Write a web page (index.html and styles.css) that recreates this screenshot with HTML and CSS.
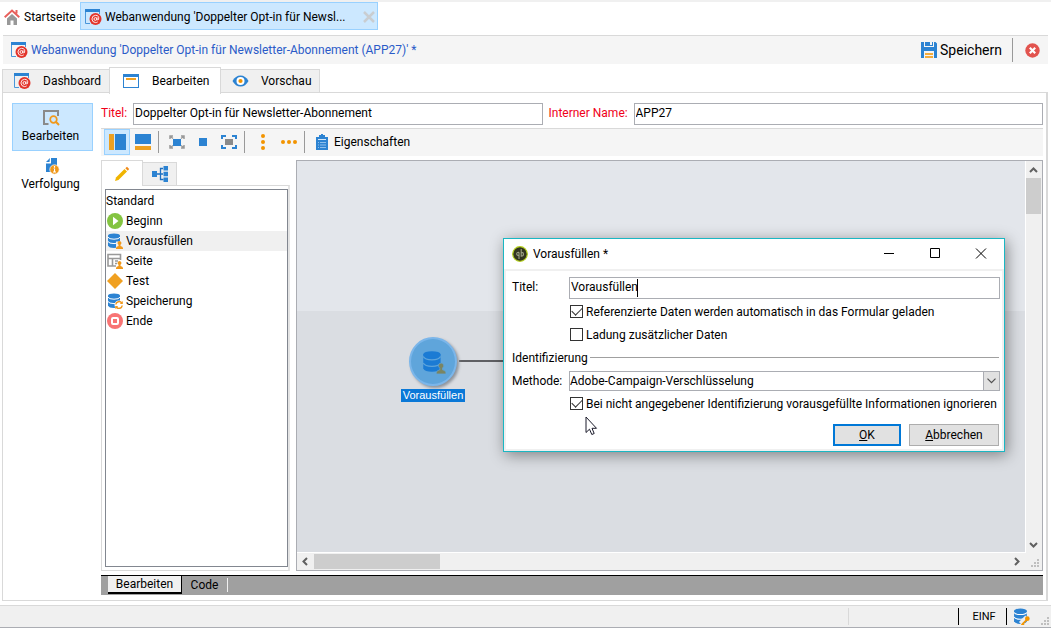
FILE: index.html
```
<!DOCTYPE html>
<html lang="de">
<head>
<meta charset="utf-8">
<title>Webanwendung</title>
<link rel="stylesheet" href="styles.css">
</head>
<body>
<svg class="defs" aria-hidden="true">
  <symbol id="webapp" viewBox="0 0 17 16">
    <path d="M.5 3V14.500H5M14.500 3v2" fill="none" stroke="#4a96da" stroke-width="1"/>
    <rect x="0" y="0" width="15" height="3" fill="#2c83d2"/>
    <circle cx="10.500" cy="10" r="6" fill="#e3342b"/>
    <circle cx="10.400" cy="10" r="1.400" fill="none" stroke="#fff" stroke-width=".9"/>
    <path d="M12 8.300v2q.3 1.200 1.500.3Q14.600 6.400 10.500 6.300Q7 6.600 6.900 10Q7.200 13.400 10.500 13.600q1.200 0 2.200-.7" fill="none" stroke="#fff" stroke-width=".9"/>
  </symbol>
  <symbol id="db" viewBox="0 0 16 16">
    <path d="M1 2.500V12.500Q2 15 7 15Q12 15 13 12.500V2.500Z" fill="#2c83d2"/>
    <ellipse cx="7" cy="2.800" rx="6" ry="2.400" fill="#2c83d2"/>
    <path d="M1 4.200Q2 6.200 7 6.200T13 4.200M1 8.500Q2 10.600 7 10.600T13 8.500" fill="none" stroke="#fff" stroke-width="1"/>
  </symbol>
  <symbol id="person" viewBox="0 0 7 8">
    <path d="M3.500 0a2 2 0 0 1 1 3.700L4.500 5Q6.800 5.300 7 7V8H0V7Q.2 5.300 2.500 5V3.700A2 2 0 0 1 3.500 0Z"/>
  </symbol>
</svg>

<nav class="window-tabs">
  <a class="window-tab" href="#">
    <svg width="16" height="16" viewBox="0 0 16 16"><path d="M3 9.500L8 5l5 4.500V16h-3.500v-4.500h-3V16H3Z" fill="#999"/><path d="M.7 8.200L8 1.600l7.300 6.600M12.500 1v3.500" fill="none" stroke="#e8605c" stroke-width="2"/></svg>
    Startseite
  </a>
  <div class="window-tab current">
    <svg width="17" height="16"><use href="#webapp"/></svg>
    <span>Webanwendung 'Doppelter Opt-in für Newsl...</span>
    <button class="tab-close" aria-label="Tab schließen"><svg width="12" height="12" viewBox="0 0 12 12"><path d="M1 1l10 10M11 1L1 11" stroke="#c9cdd1" stroke-width="2.500"/></svg></button>
  </div>
</nav>

<header class="title-bar">
  <svg width="17" height="16"><use href="#webapp"/></svg>
  <h1>Webanwendung 'Doppelter Opt-in für Newsletter-Abonnement (APP27)' *</h1>
  <button class="save">
    <svg width="16" height="16" viewBox="0 0 16 16"><path d="M0 0H3V5H13V0H14.500L16 1.500V16H13V9H3V16H0Z" fill="#2c83d2"/><path d="M4 0h5v3h2V0h1v4H4Z" fill="#2c83d2"/><path d="M3 5h10v4H3z" fill="#2c83d2"/><path d="M4 12h8M4 15h8" stroke="#f29400" stroke-width="1.400"/></svg>
    Speichern
  </button>
  <button class="discard" aria-label="Abbrechen"><svg width="15" height="15" viewBox="0 0 15 15"><circle cx="7.500" cy="7.500" r="7.200" fill="#e2544f"/><path d="M4.800 4.800l5.400 5.400M10.200 4.800l-5.400 5.400" stroke="#fff" stroke-width="2.200"/></svg></button>
</header>

<nav class="page-tabs">
  <button class="page-tab tab-dash"><svg width="17" height="16"><use href="#webapp"/></svg>Dashboard</button>
  <button class="page-tab selected"><svg width="17" height="16" viewBox="0 0 17 16"><rect x="1.500" y="1.500" width="15" height="13" fill="#fff" stroke="#2c83d2"/><path d="M1 2.500h16" stroke="#2c83d2" stroke-width="3"/><path d="M4 6h10" stroke="#f0a020" stroke-width="2"/></svg>Bearbeiten</button>
  <button class="page-tab tab-view"><svg width="17" height="16" viewBox="0 0 17 16"><path d="M.5 8Q3.500 2.500 8.500 2.500T16.500 8Q13.500 13.500 8.500 13.500T.5 8Z" fill="#2c83d2"/><circle cx="8.500" cy="8" r="4" fill="#fff"/><circle cx="8.500" cy="8" r="2.100" fill="#f29400"/></svg>Vorschau</button>
</nav>

<main class="page">
  <nav class="side">
    <button class="side-item on"><svg width="18" height="18" viewBox="0 0 18 18"><path d="M6.500 15H2V2H16V7" fill="none" stroke="#8a8a8a" stroke-width="2"/><circle cx="11.500" cy="10.500" r="3.300" fill="none" stroke="#f0981a" stroke-width="1.700"/><path d="M13.800 12.800l3.200 3.200" stroke="#f0981a" stroke-width="2"/></svg>Bearbeiten</button>
    <button class="side-item"><svg width="18" height="18" viewBox="0 0 18 18"><path d="M4 6.500H9V1H15V15H4Z" fill="#2c83d2"/><path d="M8 1L4 5H7.500Z" fill="#2c83d2"/><circle cx="12.500" cy="12.500" r="4.700" fill="#f0981a" stroke="#fff" stroke-width=".7"/><path d="M12.500 9v1.700M11.500 12h1v3M11 15h3" stroke="#fff" stroke-width="1.200"/></svg>Verfolgung</button>
  </nav>

  <section class="editor">
    <div class="fields">
      <label for="title">Titel:</label>
      <input id="title" type="text" value="Doppelter Opt-in für Newsletter-Abonnement">
      <label for="iname" class="second">Interner Name:</label>
      <input id="iname" class="wide" type="text" value="APP27">
    </div>

    <div class="toolbar">
      <button class="tool pressed" aria-label="Vertikal"><svg width="18" height="16" viewBox="0 0 18 16"><path d="M1 0h5v16H1z" fill="#eda020"/><path d="M7 0h11v16H7z" fill="#2c83d2"/></svg></button>
      <button class="tool" aria-label="Horizontal"><svg width="16" height="16" viewBox="0 0 16 16"><path d="M0 0h16v10H0z" fill="#2c83d2"/><path d="M0 12h16v4H0z" fill="#eda020"/></svg></button>
      <span class="sep"></span>
      <button class="tool" aria-label="Einpassen"><svg width="16" height="16" viewBox="0 0 16 16"><path d="M1 5V2h3M12 2h3v3M15 11v3h-3M4 14H1v-3M1.500 2.500l2.500 2M14.500 2.500L12 4.500M1.500 13.500L4 11.500M14.500 13.500L12 11.500" fill="none" stroke="#999" stroke-width="1.500"/><path d="M4 5h8v7H4z" fill="#2c83d2"/></svg></button>
      <button class="tool" aria-label="Originalgröße"><svg width="16" height="16" viewBox="0 0 16 16"><path d="M4 4h8v8H4z" fill="#2c83d2"/></svg></button>
      <button class="tool" aria-label="Vollbild"><svg width="16" height="16" viewBox="0 0 16 16"><path d="M4 5h8v6H4z" fill="#8a8a8a"/><path d="M1 5V2h4M11 2h4v3M15 11v3h-4M5 14H1v-3" fill="none" stroke="#2c83d2" stroke-width="2"/></svg></button>
      <span class="sep"></span>
      <button class="tool" aria-label="Vertikal ausrichten"><svg width="16" height="16" viewBox="0 0 16 16" fill="#f29400"><circle cx="8" cy="2" r="2"/><circle cx="8" cy="8" r="2"/><circle cx="8" cy="14" r="2"/></svg></button>
      <button class="tool" aria-label="Horizontal ausrichten"><svg width="16" height="16" viewBox="0 0 16 16" fill="#f29400"><circle cx="2" cy="8" r="2"/><circle cx="8" cy="8" r="2"/><circle cx="14" cy="8" r="2"/></svg></button>
      <span class="sep"></span>
      <button class="tool text"><svg width="16" height="16" viewBox="0 0 16 16"><path d="M2 3h3V1h2V0h2v1h2v2h3v13H2z" fill="#2c83d2"/><path d="M4 5.500h8" stroke="#d5e8f9"/><path d="M4 8.500h1M6 8.500h6M4 11h1M6 11h6M4 13.500h1M6 13.500h6" stroke="#8fc0ec"/></svg>Eigenschaften</button>
    </div>

    <div class="work">
      <aside class="palette">
        <div class="palette-tabs">
          <button class="ptab active" aria-label="Aktivitäten"><svg width="16" height="16" viewBox="0 0 16 16"><path d="M1 15l1-3.500L10.500 3l2.500 2.500L4.500 14Z" fill="#f0b400"/><path d="M11.300 2.200L13 .8 15.200 3l-1.400 1.700Z" fill="#f08a1a"/></svg></button>
          <button class="ptab" aria-label="Struktur"><svg width="16" height="16" viewBox="0 0 16 16"><path d="M5 8h3M11 2.500H8.500v11h3M8 8h3" fill="none" stroke="#1d6fc0" stroke-width="1.300"/><path d="M0 5h5v6H0zM11.500 0H16v4.500h-4.500zM11.500 5.800H16v4.500h-4.500zM11.500 11.500H16V16h-4.500z" fill="#2c83d2"/></svg></button>
        </div>
        <div class="palette-body">
          <ul class="list">
            <li class="group">Standard</li>
            <li><svg width="16" height="16" viewBox="0 0 16 16"><circle cx="8" cy="8" r="8" fill="#84c441"/><path d="M6 3.800L11.500 8 6 12.200z" fill="#fff"/></svg>Beginn</li>
            <li class="hover"><svg width="16" height="16" viewBox="0 0 16 16"><use href="#db"/><path d="M9 8.500h7V16H9z" fill="#f0f0f0"/><use href="#person" x="9" y="8" width="7" height="8" fill="#f0981a"/></svg>Vorausfüllen</li>
            <li><svg width="16" height="16" viewBox="0 0 16 16"><path d="M9 13H1V1.500H13.500V7M1 5.500H13.500M5.500 6V13M8 8h3M8 10.500h2" fill="none" stroke="#999" stroke-width="1.600"/><use href="#person" x="9" y="8" width="7" height="8" fill="#f0981a"/></svg>Seite</li>
            <li><svg width="16" height="16" viewBox="0 0 16 16"><path d="M8 0l8 8-8 8-8-8z" fill="#f0a020"/></svg>Test</li>
            <li><svg width="16" height="16" viewBox="0 0 16 16"><use href="#db"/><circle cx="12" cy="12" r="4.500" fill="#fff"/><path d="M8.800 11.500a3.300 3.300 0 0 1 6-1.500M15.200 12.500a3.300 3.300 0 0 1-6 1.500" fill="none" stroke="#f0981a" stroke-width="1.500"/><path d="M15.800 8v3h-3zM8.200 16v-3h3z" fill="#f0981a"/></svg>Speicherung</li>
            <li><svg width="16" height="16" viewBox="0 0 16 16"><circle cx="8" cy="8" r="8" fill="#f87474"/><rect x="5" y="5" width="6" height="6" rx="1" fill="#f87474" stroke="#fff" stroke-width="2"/></svg>Ende</li>
          </ul>
        </div>
      </aside>

      <div class="canvas">
        <div class="stage">
          <div class="link"></div>
          <div class="node">
            <div class="disc"><svg width="26" height="26" viewBox="0 0 24 24"><path d="M3 5v13q1.500 3 8 3t8-3V5z" fill="#1b7bd4"/><ellipse cx="11" cy="5" rx="8" ry="3" fill="#1b7bd4"/><path d="M3 7q1.500 3 8 3t8-3M3 13q1.500 3 8 3t8-3" fill="none" stroke="#5fa5db" stroke-width="1.200"/><use href="#person" x="15" y="13" width="9" height="10" fill="#7a8562" stroke="#5fa5db" stroke-width=".5"/></svg></div>
            <span class="node-name">Vorausfüllen</span>
          </div>
        </div>
        <div class="vbar">
          <svg width="9" height="6" viewBox="0 0 9 6"><path d="M1 5l3.500-3.500L8 5" fill="none" stroke="#606060" stroke-width="2"/></svg>
          <span class="vthumb"></span>
          <svg class="end" width="9" height="6" viewBox="0 0 9 6"><path d="M1 1l3.500 3.500L8 1" fill="none" stroke="#606060" stroke-width="2"/></svg>
        </div>
        <div class="hbar">
          <svg width="6" height="9" viewBox="0 0 6 9"><path d="M5 1L1.500 4.500 5 8" fill="none" stroke="#606060" stroke-width="2"/></svg>
          <span class="hthumb"></span>
          <svg class="end" width="6" height="9" viewBox="0 0 6 9"><path d="M1 1l3.500 3.500L1 8" fill="none" stroke="#606060" stroke-width="2"/></svg>
        </div>
        <div class="corner"><svg width="8" height="8" viewBox="0 0 8 8"><path d="M6 0h2v2H6zM3 3h2v2H3zM6 3h2v2H6zM0 6h2v2H0zM3 6h2v2H3zM6 6h2v2H6z" fill="#bfbfbf"/></svg></div>
      </div>
    </div>

    <div class="sheet-tabs">
      <button class="sheet active">Bearbeiten</button>
      <button class="sheet">Code</button>
    </div>
  </section>
</main>

<footer class="status">
  <span class="cell grow"></span>
  <span class="cell blank"></span>
  <span class="cell caps">EINF</span>
  <span class="cell conn"><svg width="17" height="17" viewBox="0 0 16 16"><use href="#db"/><path d="M7 14.500L13 8.500" stroke="#efefef" stroke-width="4"/><path d="M8 16l5.500-5.500M8.500 14.500l1.800 1.500" fill="none" stroke="#f29400" stroke-width="1.600"/><circle cx="13.500" cy="10" r="2.200" fill="#f29400"/></svg></span>
  <svg class="grip" width="8" height="8" viewBox="0 0 8 8"><path d="M6 0h2v2H6zM3 3h2v2H3zM6 3h2v2H6zM0 6h2v2H0zM3 6h2v2H3zM6 6h2v2H6z" fill="#bfbfbf"/></svg>
</footer>

<section class="dialog" role="dialog" aria-labelledby="dlg-title">
  <header class="dialog-head">
    <svg width="16" height="16" viewBox="0 0 16 16"><circle cx="8" cy="8" r="7.300" fill="#32351f" stroke="#b4cf1d" stroke-width="1.200"/><path d="M7 13V6.300M7 6.300q-2.300-.2-2.300 1.600 0 1.700 2 1.700M9.200 3v7.200q2.300 0 2.300-2.100 0-1.700-2-1.700" fill="none" stroke="#9da284" stroke-width="1.100"/></svg>
    <h2 id="dlg-title">Vorausfüllen *</h2>
    <button class="wbtn" aria-label="Minimieren"><svg width="12" height="12" viewBox="0 0 12 12"><path d="M1 5.500h10" stroke="#000"/></svg></button>
    <button class="wbtn" aria-label="Maximieren"><svg width="12" height="12" viewBox="0 0 12 12"><path d="M1.500 .5h9v9h-9z" fill="none" stroke="#000"/></svg></button>
    <button class="wbtn" aria-label="Schließen"><svg width="12" height="12" viewBox="0 0 12 12"><path d="M1 .5l10 10M11 .5l-10 10" stroke="#000"/></svg></button>
  </header>
  <form class="dialog-body">
    <div class="row">
      <label for="dtitle">Titel:</label>
      <div class="caret-box"><input id="dtitle" type="text" value="Vorausfüllen"><span class="caret"></span></div>
    </div>
    <label class="check"><input type="checkbox" checked>Referenzierte Daten werden automatisch in das Formular geladen</label>
    <label class="check"><input type="checkbox">Ladung zusätzlicher Daten</label>
    <div class="section">Identifizierung</div>
    <div class="row method">
      <label for="method">Methode:</label>
      <div class="select-box">
        <select id="method"><option>Adobe-Campaign-Verschlüsselung</option></select>
        <span class="arrow"><svg width="9" height="6" viewBox="0 0 9 6"><path d="M.5 .7l4 4 4-4" fill="none" stroke="#505050" stroke-width="1.200"/></svg></span>
      </div>
    </div>
    <label class="check"><input type="checkbox" checked>Bei nicht angegebener Identifizierung vorausgefüllte Informationen ignorieren</label>
    <div class="actions">
      <button type="button" class="ok"><u>O</u>K</button>
      <button type="button" class="cancel"><u>A</u>bbrechen</button>
    </div>
  </form>
  <svg class="pointer" width="13" height="20" viewBox="0 0 13 20"><path d="M1 1v15.500l3.500-3.300 2.300 5.300 2.400-1L7 12.300h4.500Z" fill="#fff" stroke="#1a1a2a"/></svg>
</section>
</body>
</html>
```
FILE: styles.css
```
* { box-sizing: border-box; }
html, body { height: 100%; }
body {
  margin: 0;
  display: flex;
  flex-direction: column;
  background: #fff;
  color: #000;
  font: 12px/16px Roboto, "Noto Sans", sans-serif;
  position: relative;
  overflow: hidden;
}
button, input, select { font: inherit; color: inherit; }
button { background: none; border: 0; padding: 0; margin: 0; white-space: nowrap; }
svg { flex: none; display: block; }
.defs { position: absolute; width: 0; height: 0; }
h1, h2 { margin: 0; font: inherit; }

/* window tabs */
.window-tabs { display: flex; border-top: 2px solid #f0f0f0; height: 32px; padding-left: 4px; }
.window-tab { display: flex; align-items: center; gap: 4px; width: 76px; height: 30px; color: #000; text-decoration: none; }
.window-tab.current { width: 298px; height: 28px; gap: 3px; background: #cce8ff; border: 1px solid #99d1ff; padding: 2px 2px 0 4px; }
.window-tab span { flex: 1; white-space: nowrap; }

/* title bar */
.title-bar {
  display: flex; align-items: center; gap: 3px;
  margin: 3px 3px 0 3px; height: 29px; padding: 0 8px;
  background: #f5f5f5; border-top: 1px solid #d9d9d9;
}
.title-bar h1 { flex: 1; color: #2a5bc8; }
.save { display: flex; align-items: center; gap: 3px; font-size: 14px; height: 24px; padding-right: 10px; border-right: 1px solid #999; }
.discard { margin-left: 9px; }

/* page tabs */
.page-tabs { display: flex; align-items: flex-end; height: 27px; margin: 2px 0 0 2px; }
.page-tab { display: flex; align-items: center; gap: 12px; height: 24px; padding: 0 9px 1px 11px; background: #f0f0f0; border: 1px solid #d9d9d9; border-bottom: 0; }
.page-tab.selected { height: 27px; width: 112px; background: #fff; margin-bottom: -1px; padding: 0 0 0 12px; gap: 13px; z-index: 1; }
.tab-dash { width: 107px; border-right: 0; }
.tab-view { width: 99px; border-left: 0; }

/* page */
.page { flex: 1; min-height: 0; display: flex; margin: -1px 3px 0 2px; border: 1px solid #d9d9d9; border-right-width: 2px; padding: 10px 3px 5px 9px; }
.side { width: 81px; display: flex; flex-direction: column; margin-right: 8px; }
.side-item { display: flex; flex-direction: column; align-items: center; gap: 1px; height: 48px; padding: 5px 4px 0 0; border: 1px solid transparent; width: 81px; }
.side-item.on { background: #cce8ff; border-color: #99d1ff; }
.editor { flex: 1; min-width: 0; display: flex; flex-direction: column; }

.fields { display: flex; align-items: flex-start; height: 25px; }
.fields label { width: 32px; color: #f00018; line-height: 20px; white-space: nowrap; }
.fields label.second { width: 85px; margin-left: 6px; }
.fields input { flex: 1 1 0; min-width: 0; }
input[type="text"] { height: 22px; border: 1px solid #abadb3; border-radius: 0; padding: 0 1px 2px; background: #fff; outline: 0; }

.toolbar { display: flex; align-items: flex-start; height: 28px; background: #f5f5f5; border-top: 1px solid #d9d9d9; padding-left: 3px; }
.tool { width: 26px; height: 26px; display: flex; align-items: center; justify-content: center; }
.tool.pressed { background: #cce8ff; border: 1px solid #99d1ff; }
.sep { width: 1px; height: 22px; background: #999; margin: 2px 5px 0 2px; }
.tool.text { width: auto; gap: 4px; padding-left: 4px; }

.work { flex: 1; min-height: 0; display: flex; margin-top: 4px; gap: 6px; }
.palette { width: 189px; display: flex; flex-direction: column; }
.palette-tabs { display: flex; align-items: flex-end; height: 25px; }
.ptab { width: 34px; height: 23px; display: flex; align-items: center; justify-content: center; background: #f0f0f0; border: 1px solid #d9d9d9; border-width: 1px 1px 0 0; }
.ptab.active { width: 42px; height: 26px; background: #fff; border-left-width: 1px; z-index: 1; margin-bottom: -1px; }
.palette-body { flex: 1; min-height: 0; border: 1px solid #d9d9d9; border-right: 2px solid #e4e4e4; padding: 3px 0 3px 3px; display: flex; }
.list { flex: 1; margin: 0; padding: 1px 0 0; list-style: none; border: 1px solid #828790; }
.list li { display: flex; align-items: center; gap: 3px; height: 20px; padding-left: 1px; }
.list .group { padding-left: 0; }
.list .hover { background: #f0f0f0; }

.canvas { flex: 1; min-width: 0; display: grid; grid-template: 1fr 17px / 1fr 16px; border: 1px solid #abadb3; background: #f0f0f0; }
.stage { position: relative; overflow: hidden; background: linear-gradient(#e3e6eb 150px, #dadde2 150px); border-right: 1px solid #fff; border-bottom: 1px solid #fff; }
.node { position: absolute; left: 104px; top: 176px; width: 64px; display: flex; flex-direction: column; align-items: center; gap: 3px; }
.disc { width: 48px; height: 49px; border-radius: 50%; background: #5fa5db; border: 2px solid #7bb6ea; box-shadow: 2px 2px 3px #8e949c; display: flex; align-items: center; justify-content: center; }
.node-name { width: 64px; background: #0a78d7; color: #fff; font: 11px/13px "Liberation Sans", Arial, sans-serif; text-align: center; white-space: nowrap; }
.link { position: absolute; left: 162px; top: 199px; width: 200px; height: 2px; background: #5f6064; }
.vbar { display: flex; flex-direction: column; align-items: center; padding: 6px 1px 5px 0; gap: 5px; }
.vthumb { width: 15px; height: 36px; background: #cdcdcd; }
.hbar { display: flex; align-items: center; padding: 0 6px 0 5px; gap: 6px; }
.hthumb { width: 126px; height: 15px; background: #cdcdcd; }
.vbar .end { margin-top: auto; }
.hbar .end { margin-left: auto; }
.corner { display: flex; align-items: flex-end; justify-content: flex-end; padding: 3px; }

.sheet-tabs { display: flex; height: 20px; margin-top: 4px; background: #a0a0a0; border-top: 1px solid #000; padding-left: 7px; }
.sheet { width: 46px; height: 14px; margin-top: 2px; border-right: 1px solid #f0f0f0; line-height: 12px; }
.sheet.active { width: 74px; height: 18px; margin-top: 0; background: #f0f0f0; border-right: 1px solid #000; border-bottom: 2px solid #000; line-height: 14px; }

/* status bar */
.status { display: flex; align-items: center; height: 23px; margin-top: 4px; background: #f0f0f0; border-top: 1px solid #d9d9d9; border-bottom: 1px solid #abadb3; }
.cell { height: 17px; display: flex; align-items: center; justify-content: center; }
.cell.grow { flex: 1; border-right: 1px solid #d9d9d9; }
.cell.blank { width: 110px; border-right: 1px solid #000; }
.cell.caps { width: 48px; border-right: 1px solid #000; padding-left: 3px; font-size: 11px; }
.cell.conn { width: 29px; }
.grip { align-self: flex-end; margin: 0 2px 2px 5px; }

/* dialog */
.dialog { position: absolute; left: 503px; top: 238px; width: 502px; background: #fff; border: 1px solid #1ab7c3; box-shadow: 2px 3px 14px rgba(0, 0, 0, .42); }
.dialog-head { display: flex; align-items: center; height: 30px; padding-left: 8px; }
.dialog-head h2 { flex: 1; margin-left: 5px; }
.wbtn { width: 46px; height: 28px; display: flex; align-items: center; justify-content: center; }
.dialog-body { border: 2px solid #f0f0f0; padding: 6px 2px 3px 6px; display: flex; flex-direction: column; }
.row { display: flex; }
.row > label { width: 57px; line-height: 20px; }
.row > div { flex: 1; position: relative; display: flex; }
.row input { flex: 1; min-width: 0; }
.caret { position: absolute; left: 68px; top: 2px; width: 1px; height: 18px; background: #000; }
.check { display: flex; align-items: center; gap: 3px; height: 23px; margin-left: 58px; white-space: nowrap; }
.row + .check { margin-top: 1px; }
.check input { appearance: none; flex: none; width: 13px; height: 13px; margin: 0; border: 1px solid #333; background: #fff; position: relative; }
.check input:checked::after { content: ""; position: absolute; left: 1px; top: 1px; width: 9px; height: 5px; border: solid #333; border-width: 0 0 1px 1px; transform: rotate(-45deg); }
.section { display: flex; align-items: center; gap: 2px; height: 23px; }
.section::after { content: ""; flex: 1; height: 1px; background: #a0a0a0; margin-right: 1px; }
.method { margin-top: 2px; }
.select-box select { appearance: none; flex: 1; height: 20px; border: 1px solid #abadb3; border-radius: 0; background: #fff; padding: 0 18px 0 0; outline: 0; }
.arrow { position: absolute; right: 0; top: 0; width: 17px; height: 20px; background: #e1e1e1; border: 1px solid #abadb3; display: flex; align-items: center; justify-content: center; pointer-events: none; }
.actions { display: flex; justify-content: flex-end; gap: 8px; margin-top: 9px; padding-right: 1px; }
.actions button { height: 22px; background: #e1e1e1; border: 1px solid #adadad; line-height: 18px; }
.actions .ok { width: 68px; border: 2px solid #0078d7; }
.actions .cancel { width: 90px; }
.pointer { position: absolute; left: 81px; top: 177px; }
```
